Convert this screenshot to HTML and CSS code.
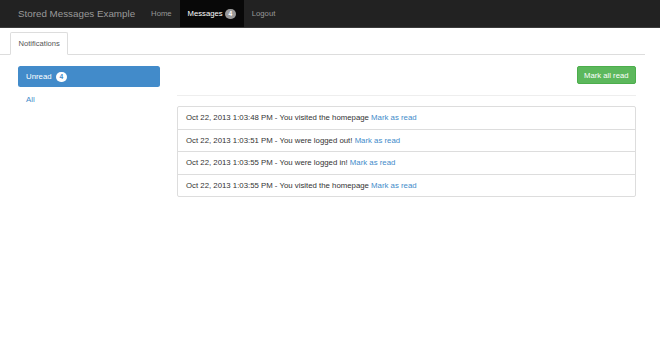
FILE: index.html
```html
<!DOCTYPE html>
<html lang="en">
<head>
    <meta charset="UTF-8">
    <title>Stored Messages Example</title>
    <link rel="stylesheet" href="styles.css">
</head>
<body>
    <nav class="navbar">
        <a href="#" class="brand">Stored Messages Example</a>
        <ul class="nav">
            <li><a href="#">Home</a></li>
            <li class="active"><a href="#">Messages <span class="badge">4</span></a></li>
            <li><a href="#">Logout</a></li>
        </ul>
    </nav>
    <div class="container">
        <ul class="tabs">
            <li class="active"><a href="#">Notifications</a></li>
        </ul>
        <div class="row">
            <div class="sidebar">
                <ul class="pills">
                    <li class="active"><a href="#">Unread <span class="badge">4</span></a></li>
                    <li><a href="#">All</a></li>
                </ul>
            </div>
            <div class="main">
                <div class="toolbar">
                    <button class="btn-success">Mark all read</button>
                </div>
                <hr />
                <ul class="list-group">
                    <li class="list-group-item">Oct 22, 2013 1:03:48 PM - You visited the homepage <a href="#">Mark as read</a></li>
                    <li class="list-group-item">Oct 22, 2013 1:03:51 PM - You were logged out! <a href="#">Mark as read</a></li>
                    <li class="list-group-item">Oct 22, 2013 1:03:55 PM - You were logged in! <a href="#">Mark as read</a></li>
                    <li class="list-group-item">Oct 22, 2013 1:03:55 PM - You visited the homepage <a href="#">Mark as read</a></li>
                </ul>
            </div>
        </div>
    </div>
</body>
</html>
```

FILE: styles.css
```css
html, body {
    height: 100%;
}
body {
    margin: 0;
    padding: 0;
    font-family: "Liberation Sans", Arial, Helvetica, sans-serif;
    font-size: 7.8px;
    color: #333;
    background: #fff;
}
a {
    color: #428bca;
    text-decoration: none;
}
ul {
    list-style: none;
    margin: 0;
    padding: 0;
}
.navbar {
    display: flex;
    height: 27px;
    padding-left: 10px;
    background-color: #222;
    border-bottom: 1px solid #3c3c3c;
}
.brand {
    padding: 0 8px;
    line-height: 27px;
    font-size: 9.8px;
    color: #999;
}
.nav {
    display: flex;
}
.nav a {
    display: block;
    padding: 0 8px;
    line-height: 27px;
    font-size: 7.7px;
    color: #999;
}
.nav .active a {
    background-color: #080808;
    color: #fff;
}
.badge {
    display: inline-block;
    min-width: 4px;
    padding: 1px 3.5px;
    font-size: 6.6px;
    font-weight: bold;
    line-height: 8px;
    text-align: center;
    border-radius: 6px;
    background-color: #999;
    color: #fff;
}
.container {
    width: 645px;
    padding-top: 4px;
}
.tabs {
    display: flex;
    padding-left: 10px;
    border-bottom: 1px solid #ddd;
}
.tabs li {
    margin-bottom: -1px;
}
.tabs a {
    display: block;
    padding: 0 7.5px;
    line-height: 21px;
    font-size: 7.6px;
    color: #555;
    border: 1px solid #ddd;
    border-bottom-color: #fff;
    border-radius: 2px 2px 0 0;
    background: #fff;
}
.row {
    display: flex;
    margin-top: 11px;
}
.sidebar {
    width: 142px;
    margin-left: 18px;
}
.pills li {
    margin-bottom: 2px;
}
.pills a {
    display: block;
    padding: 0 8px;
    line-height: 21px;
    border-radius: 2.5px;
}
.pills .active a {
    background-color: #428bca;
    color: #fff;
}
.pills .active .badge {
    margin-left: 2px;
    background-color: #fff;
    color: #428bca;
}
.main {
    width: 459px;
    margin-left: 17px;
}
.toolbar {
    display: flex;
    justify-content: flex-end;
}
.btn-success {
    height: 18px;
    padding: 0 6.5px;
    font-family: inherit;
    font-size: 7.7px;
    color: #fff;
    background-color: #5cb85c;
    border: 1px solid #4cae4c;
    border-radius: 2px;
}
hr {
    margin: 11px 0 10px 0;
    border: 0;
    border-top: 1px solid #eee;
}
.list-group-item {
    padding: 5px 8px;
    line-height: 11.5px;
    border: 1px solid #ddd;
    margin-bottom: -1px;
}
.list-group-item:first-child {
    border-radius: 2px 2px 0 0;
}
.list-group-item:last-child {
    border-radius: 0 0 2px 2px;
}
```
